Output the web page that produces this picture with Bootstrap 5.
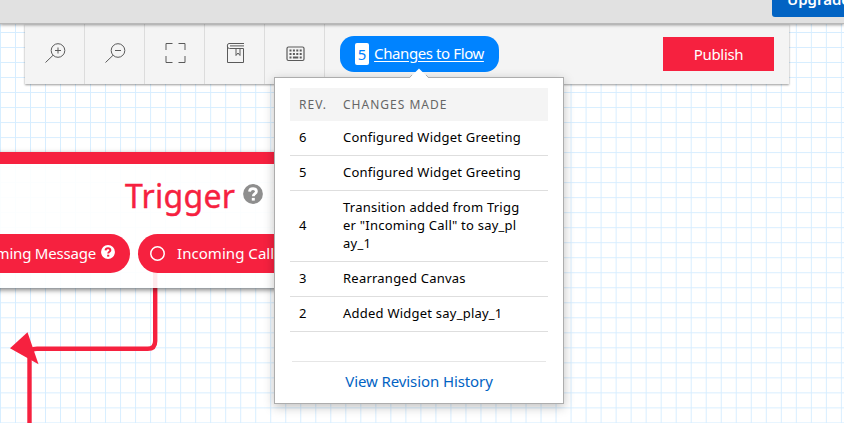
<!DOCTYPE html>
<html lang="en">
<head>
<meta charset="utf-8">
<meta name="viewport" content="width=device-width, initial-scale=1">
<title>Flow editor</title>
<link href="https://cdn.jsdelivr.net/npm/bootstrap@5.3.0/dist/css/bootstrap.min.css" rel="stylesheet">
<style>
  :root { --flow-red: #f6213f; --flow-blue: #0083ff; --link-blue: #0263c3; }
  body { font-family: "Noto Sans", "Open Sans", sans-serif; height: 423px; }
  .flow-page {
    width: 844px; height: 423px;
    background:
      linear-gradient(to right, #d6edff 1.3px, transparent 1.3px) 0 0 / 15.03px 15.03px,
      linear-gradient(to bottom, #d6edff 1.3px, transparent 1.3px) 0 2px / 15.03px 15.03px,
      #fff;
  }
  .top-strip { height: 24px; background: #e1e1e1; border-bottom: 1px solid #b8b8b8; box-shadow: 0 1px 3px rgba(0,0,0,.4); z-index: 3; }
  .upgrade { width: 90px; height: 32px; margin: -15px -18px 0 0; padding: 3px 0 0 15px; border-radius: 3px; background: #0263c3; font-size: 15px; line-height: 23px; }
  .toolbar { width: 764px; height: 60px; margin-left: 25px; background: #f4f4f4; box-shadow: 0 1px 2px rgba(0,0,0,.4); z-index: 2; }
  .tool { width: 60px; height: 60px; padding-bottom: 3px; border-right: 1px solid #dcdcdc; color: #5a5a5a; }
  .tool svg { display: block; fill: none; stroke: currentColor; stroke-width: 1; }
  .changes { width: 159px; height: 36px; margin-left: 15px; border-radius: 14px; background: var(--flow-blue); font-size: 15px; gap: 5px; }
  .count { width: 14px; height: 22px; border-radius: 2px; color: var(--flow-blue); line-height: 22px; }
  .label-link { margin-top: -2px; letter-spacing: -.4px; text-underline-offset: 2px; text-decoration-thickness: 1px; line-height: 22px; }
  .publish { width: 111px; height: 34px; margin-right: 15px; background: var(--flow-red); font-size: 15px; line-height: 32px; letter-spacing: -.3px; }
  .history { left: -66px; top: 41px; width: 290px; height: 327px; padding: 10px 15px 0; border: 1px solid #adadad; box-shadow: 0 3px 10px rgba(0,0,0,.25); font-size: 13px; letter-spacing: .23px; color: #000; }
  .history-arrow { left: 134px; top: -10px; }
  .history table { table-layout: fixed; width: 258px; line-height: 18px; }
  .history th { height: 33px; padding: 0 8px; font-weight: 400; font-size: 12px; letter-spacing: 1px; color: #666; background: #f4f4f4; white-space: nowrap; }
  .history td { padding: 7px 8px 9px; height: 35px; border-bottom: 1px solid #dedede; }
  .history th:first-child, .history td:first-child { padding-left: 9px; padding-right: 0; }
  .history tbody tr:first-child td { height: 34px; padding-bottom: 8px; }
  .view-all { margin: 29px 2px 0; border-top: 1px solid #e6e6e6; padding-top: 8px; color: var(--link-blue); font-size: 15px; letter-spacing: -.1px; line-height: 22px; }
  .trigger { left: -130px; top: 152px; width: 540px; height: 136px; border-top: 12px solid var(--flow-red); background: rgba(255,255,255,.9); box-shadow: 0 2px 5px rgba(0,0,0,.5); color: var(--flow-red); }
  .trigger-title { height: 69px; padding-left: 255px; font-size: 32px; gap: 8px; padding-bottom: 6px; }
  .title-text { letter-spacing: .3px; -webkit-text-stroke: .4px var(--flow-red); }
  .pill { height: 39px; margin-top: .5px; padding-top: 1px; border-radius: 20px; background: var(--flow-red); font-size: 15px; white-space: nowrap; }
  .pill-message { width: 260px; padding-right: 15px; gap: 5px; letter-spacing: -.2px; }
  .pill-call { width: 230px; margin-left: 8px; padding-left: 12px; gap: 12px; letter-spacing: .05px; }
  .wires { left: 0; top: 0; }
</style>
</head>
<body class="m-0 overflow-hidden">
<div class="flow-page position-relative overflow-hidden">
  <svg class="wires position-absolute" width="300" height="423" viewBox="0 0 300 423">
    <path d="M155.200 270V341Q155.200 348.800 147.700 348.800H37Q29.500 348.800 29.500 356V423" fill="none" stroke="#f6213f" stroke-width="4.400"/>
    <path d="M10 348.200L27.500 332.300L38.500 364.300Z" fill="#f6213f"/>
  </svg>

  <section class="trigger position-absolute">
    <div class="trigger-title d-flex align-items-center">
      <span class="title-text">Trigger</span>
      <svg class="mb-1" width="20" height="20" viewBox="0 0 20 20"><circle cx="10" cy="10" r="9.900" fill="#8e8e8e"/><path d="M6.500 7.600Q6.700 4.600 10 4.600T13.400 7.500C13.400 9.800 10.300 9.500 10.300 12.300" fill="none" stroke="#fff" stroke-width="2.800"/><rect x="8.800" y="13.900" width="3" height="2.700" fill="#fff"/></svg>
    </div>
    <div class="d-flex text-white">
      <div class="pill pill-message d-flex align-items-center justify-content-end">
        <span class="msg-text">Incoming Message</span>
        <svg class="mb-1" width="14" height="14" viewBox="0 0 20 20"><circle cx="10" cy="10" r="9.900" fill="#fff"/><path d="M6.500 7.600Q6.700 4.600 10 4.600T13.400 7.500C13.400 9.800 10.300 9.500 10.300 12.300" fill="none" stroke="#f6213f" stroke-width="2.800"/><rect x="8.800" y="13.900" width="3" height="2.700" fill="#f6213f"/></svg>
      </div>
      <div class="pill pill-call d-flex align-items-center">
        <svg width="15" height="15" viewBox="0 0 15 15"><circle cx="7.500" cy="7.500" r="6.700" fill="none" stroke="#fff" stroke-width="1.500"/></svg>
        <span>Incoming Call</span>
      </div>
    </div>
  </section>

  <header class="top-strip position-relative d-flex justify-content-end">
    <div class="upgrade text-white fw-semibold">Upgrade</div>
  </header>

  <nav class="toolbar position-relative d-flex align-items-center">
    <div class="tool d-flex align-items-center justify-content-center">
      <svg width="22" height="22" viewBox="0 0 22 22"><circle cx="14" cy="8.500" r="6.800"/><path d="M9 13.300L1.500 20.500M11 8.500H17M14 5.500V11.500"/></svg>
    </div>
    <div class="tool d-flex align-items-center justify-content-center">
      <svg width="22" height="22" viewBox="0 0 22 22"><circle cx="14" cy="8.500" r="6.800"/><path d="M9 13.300L1.500 20.500M11 8.500H17"/></svg>
    </div>
    <div class="tool d-flex align-items-center justify-content-center">
      <svg width="22" height="22" viewBox="0 0 22 22"><path d="M2 8V1.500H8.500M14.500 1.500H21V8M21 14V20.500H14.500M8.500 20.500H2V14"/></svg>
    </div>
    <div class="tool d-flex align-items-center justify-content-center">
      <svg width="22" height="22" viewBox="0 0 22 22"><path d="M20 1.500H5Q3.300 1.500 3.300 4Q3.300 6.500 5.500 6.500H19.500V20.500H3.500V4M20 3.900H6"/><path d="M12 6.500V13.500L14 11L16 13.500V6.500"/></svg>
    </div>
    <div class="tool d-flex align-items-center justify-content-center">
      <svg width="22" height="22" viewBox="0 0 22 22"><rect x="3" y="5" width="17" height="13.500" rx="1.500" stroke-width="1.200"/><path d="M5.500 8.500H18M5.500 12H18" stroke-width="2" stroke-dasharray="2 1.400"/><path d="M5.500 15.500H7.500M8.900 15.500H14.300M15.700 15.500H17.700" stroke-width="2"/></svg>
    </div>
    <div class="changes position-relative d-flex align-items-center justify-content-center text-white">
      <span class="count bg-white text-center">5</span>
      <a class="label-link text-white text-decoration-underline" href="#">Changes to Flow</a>

      <div class="history position-absolute bg-white">
        <svg class="history-arrow position-absolute" width="22" height="11" viewBox="0 0 22 11"><path d="M0 10.500L10 .5L20 10.500V11H0Z" fill="#fff"/><path d="M0 10L3 7M20 10L17 7" stroke="#adadad"/></svg>
        <table>
          <colgroup><col style="width:45px"><col></colgroup>
          <thead><tr><th>REV.</th><th>CHANGES MADE</th></tr></thead>
          <tbody>
            <tr><td>6</td><td>Configured Widget Greeting</td></tr>
            <tr><td>5</td><td>Configured Widget Greeting</td></tr>
            <tr><td>4</td><td>Transition added from Trigg<br>er "Incoming Call" to say_pl<br>ay_1</td></tr>
            <tr><td>3</td><td>Rearranged Canvas</td></tr>
            <tr><td>2</td><td>Added Widget say_play_1</td></tr>
          </tbody>
        </table>
        <div class="view-all text-center">View Revision History</div>
      </div>
    </div>
    <button class="publish btn rounded-0 border-0 p-0 text-white ms-auto" type="button">Publish</button>
  </nav>
</div>
<script src="https://cdn.jsdelivr.net/npm/bootstrap@5.3.0/dist/js/bootstrap.bundle.min.js"></script>
</body>
</html>
